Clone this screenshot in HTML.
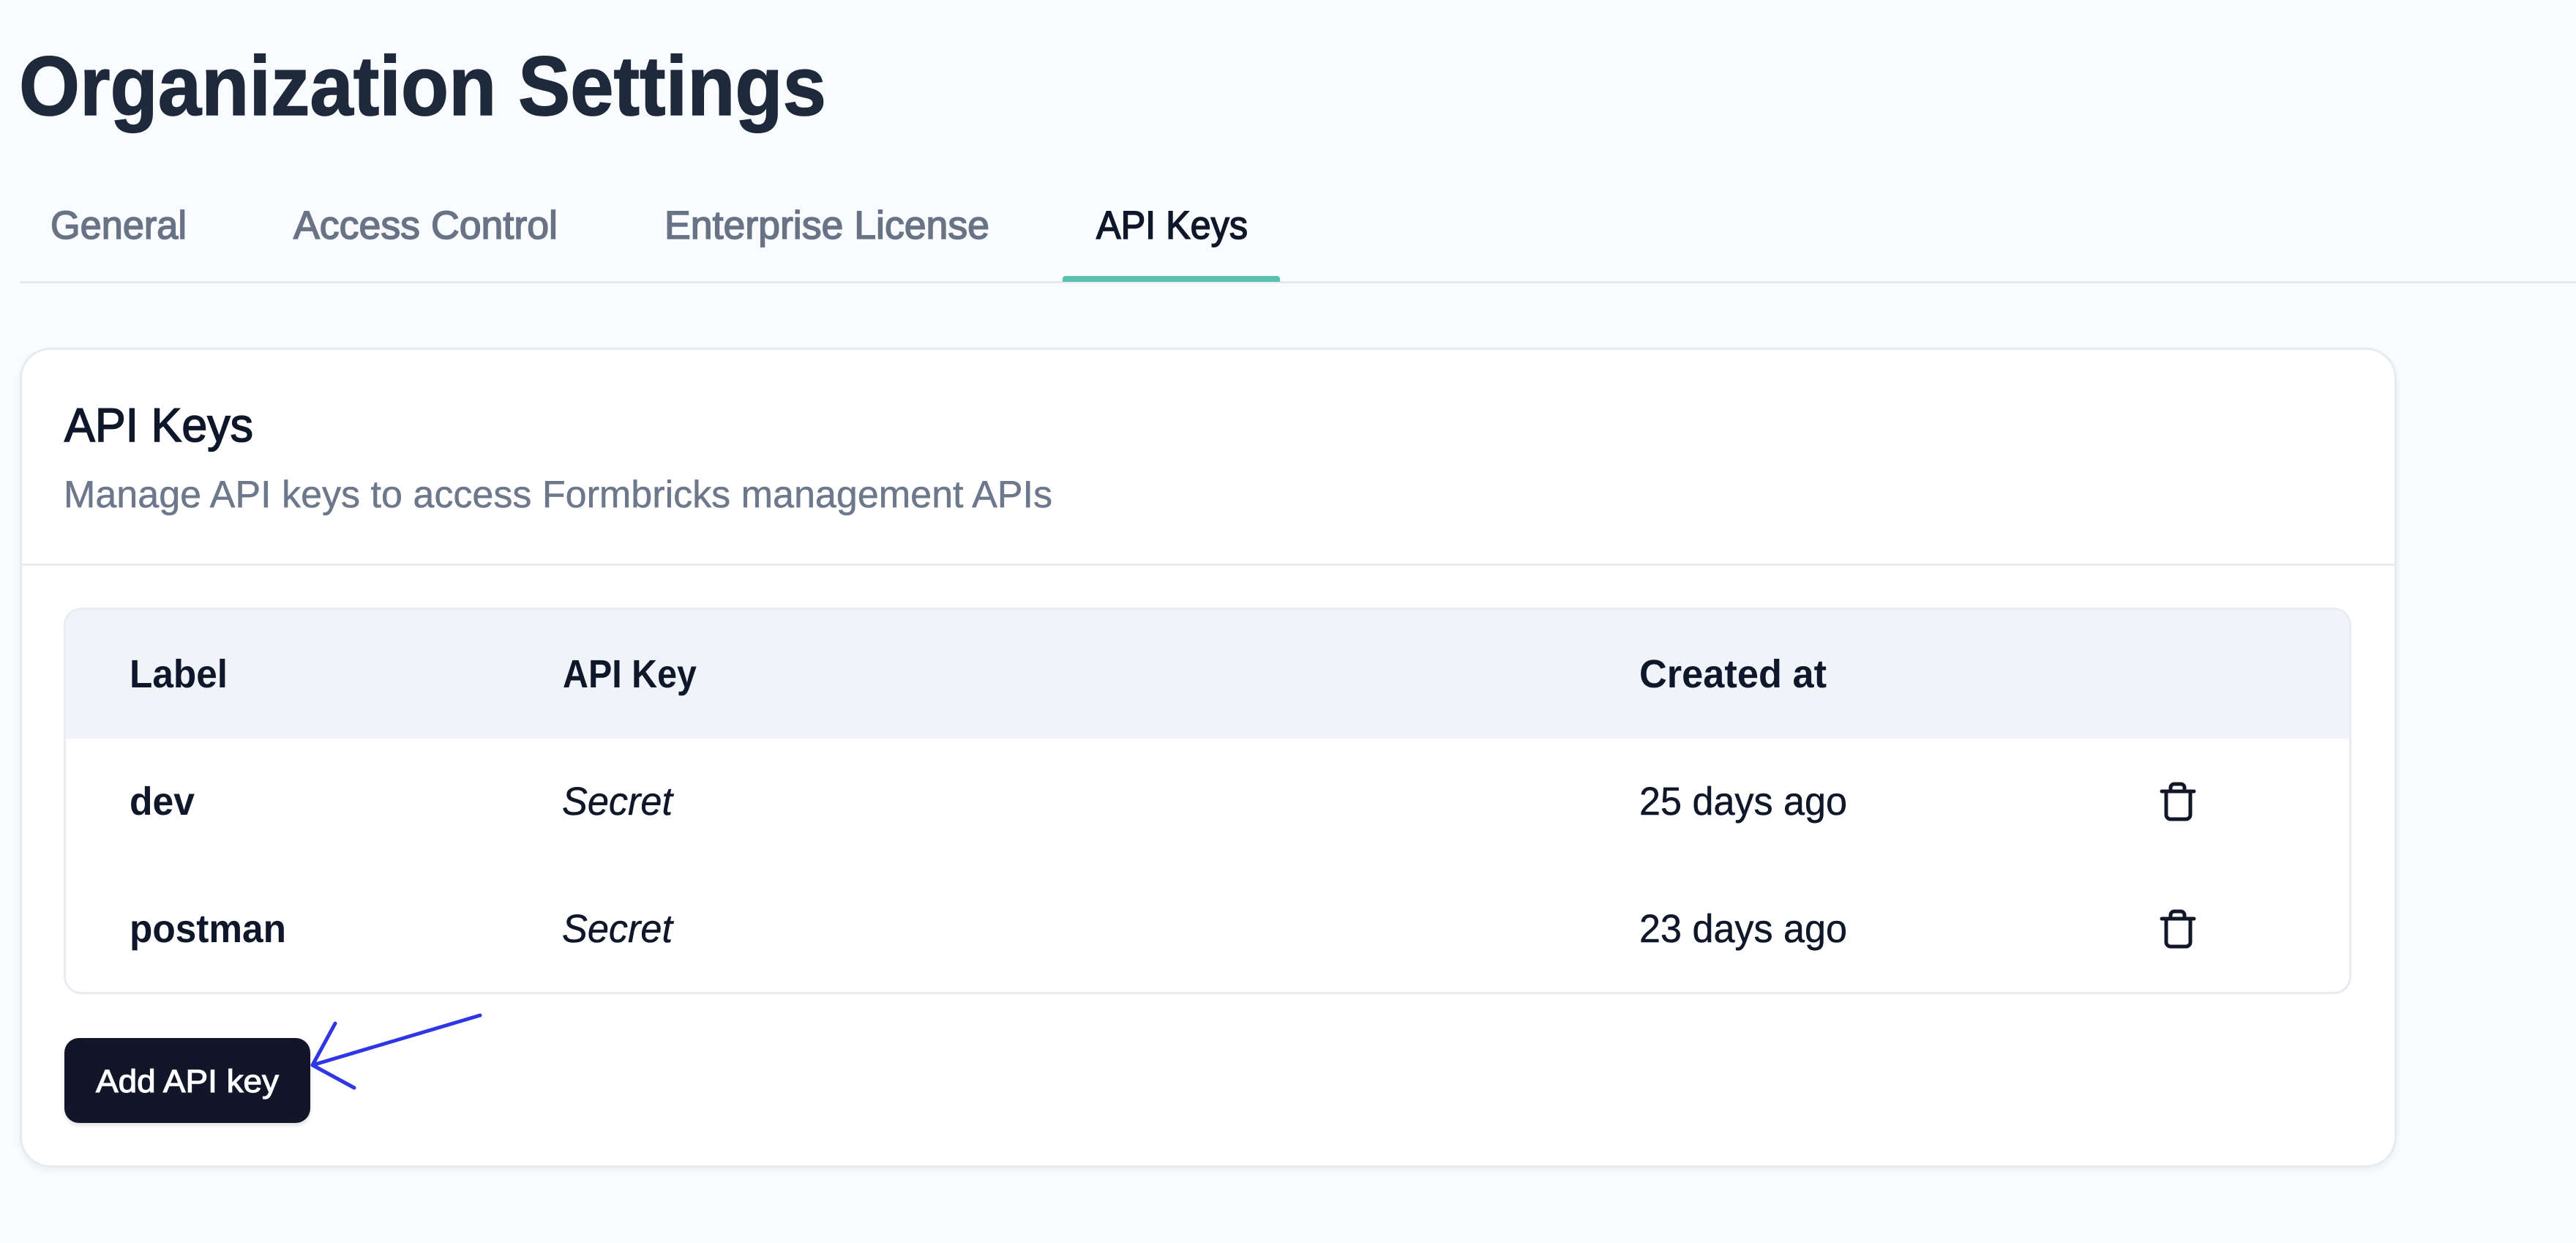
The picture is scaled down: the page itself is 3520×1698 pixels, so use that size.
<!DOCTYPE html>
<html lang="en"><head><meta charset="utf-8"><title>Organization Settings</title>
<style>
html,body{margin:0;padding:0;width:3520px;height:1698px;overflow:hidden;background:#f9fbfd}
.b{position:absolute;box-sizing:border-box}
svg{position:absolute;left:0;top:0}
text{font-family:"Liberation Sans",sans-serif;text-rendering:geometricPrecision}
</style></head><body>
<div class="b" style="left:27px;top:384px;width:3493px;height:3px;background:#e5e9ee"></div>
<div class="b" style="left:1452px;top:377px;width:297px;height:8px;background:#5ac1ae;border-radius:4px 4px 0 0"></div>
<div class="b" style="left:27px;top:475px;width:3248px;height:1120px;background:#fff;border:3px solid #e7ebf0;border-radius:42px;box-shadow:0 4px 10px rgba(15,23,42,.05)"></div>
<div class="b" style="left:28px;top:770px;width:3246px;height:3px;background:#e8ebf0"></div>
<div class="b" style="left:87px;top:830px;width:3126px;height:528px;background:#fff;border:3px solid #e8ecf1;border-radius:24px;overflow:hidden"><div style="height:176px;background:#f0f4f8"></div></div>
<div class="b" style="left:88px;top:1418px;width:336px;height:116px;background:#111729;border-radius:20px;box-shadow:0 3px 6px rgba(15,23,42,.14)"></div>
<svg width="3520" height="1698" viewBox="0 0 3520 1698" xmlns="http://www.w3.org/2000/svg">
<text x="26" y="157" font-size="115" font-weight="700" fill="#1e293b" stroke="#1e293b" stroke-width="1.5" textLength="1103" lengthAdjust="spacingAndGlyphs">Organization Settings</text>
<g font-size="54" fill="#697386" stroke="#697386" stroke-width="1.6">
<text x="69" y="326" textLength="186" lengthAdjust="spacingAndGlyphs">General</text>
<text x="401" y="326" textLength="361" lengthAdjust="spacingAndGlyphs">Access Control</text>
<text x="908" y="326" textLength="444" lengthAdjust="spacingAndGlyphs">Enterprise License</text>
<text x="1498" y="326" textLength="207" lengthAdjust="spacingAndGlyphs" fill="#0f172a" stroke="#0f172a">API Keys</text>
</g>
<text x="88" y="603" font-size="65" fill="#0f172a" stroke="#0f172a" stroke-width="1.6" textLength="258" lengthAdjust="spacingAndGlyphs">API Keys</text>
<text x="87" y="693" font-size="52" fill="#6d788c" stroke="#6d788c" stroke-width=".5" textLength="1351" lengthAdjust="spacingAndGlyphs">Manage API keys to access Formbricks management APIs</text>
<g font-size="54" font-weight="700" fill="#0f172a">
<text x="177" y="939" textLength="134" lengthAdjust="spacingAndGlyphs">Label</text>
<text x="769" y="939" textLength="183" lengthAdjust="spacingAndGlyphs">API Key</text>
<text x="2240" y="939" textLength="256" lengthAdjust="spacingAndGlyphs">Created at</text>
<text x="177" y="1113" textLength="89" lengthAdjust="spacingAndGlyphs">dev</text>
<text x="177" y="1287" textLength="214" lengthAdjust="spacingAndGlyphs">postman</text>
</g>
<g font-size="54" fill="#0f172a" stroke="#0f172a" stroke-width=".5">
<text x="768" y="1113" font-style="italic" textLength="151" lengthAdjust="spacingAndGlyphs">Secret</text>
<text x="768" y="1287" font-style="italic" textLength="151" lengthAdjust="spacingAndGlyphs">Secret</text>
<text x="2240" y="1113" textLength="284" lengthAdjust="spacingAndGlyphs">25 days ago</text>
<text x="2240" y="1287" textLength="284" lengthAdjust="spacingAndGlyphs">23 days ago</text>
</g>
<g fill="none" stroke="#111729" stroke-width="5" stroke-linecap="round" stroke-linejoin="round">
<g><path d="M2954 1081H2998"/><path d="M2960 1081V1113a6 6 0 0 0 6 6H2987a6 6 0 0 0 6-6V1081"/><path d="M2966 1081V1076a5 5 0 0 1 5-5H2980a5 5 0 0 1 5 5V1081"/></g>
<g transform="translate(0 174)"><path d="M2954 1081H2998"/><path d="M2960 1081V1113a6 6 0 0 0 6 6H2987a6 6 0 0 0 6-6V1081"/><path d="M2966 1081V1076a5 5 0 0 1 5-5H2980a5 5 0 0 1 5 5V1081"/></g>
</g>
<text x="131" y="1492" font-size="44" fill="#fff" stroke="#fff" stroke-width="1.1" textLength="250" lengthAdjust="spacingAndGlyphs">Add API key</text>
<path d="M656 1387L427 1455M458 1398L427 1455L484 1486" fill="none" stroke="#2f36e6" stroke-width="5" stroke-linecap="round" stroke-linejoin="round"/>
</svg>
</body></html>
